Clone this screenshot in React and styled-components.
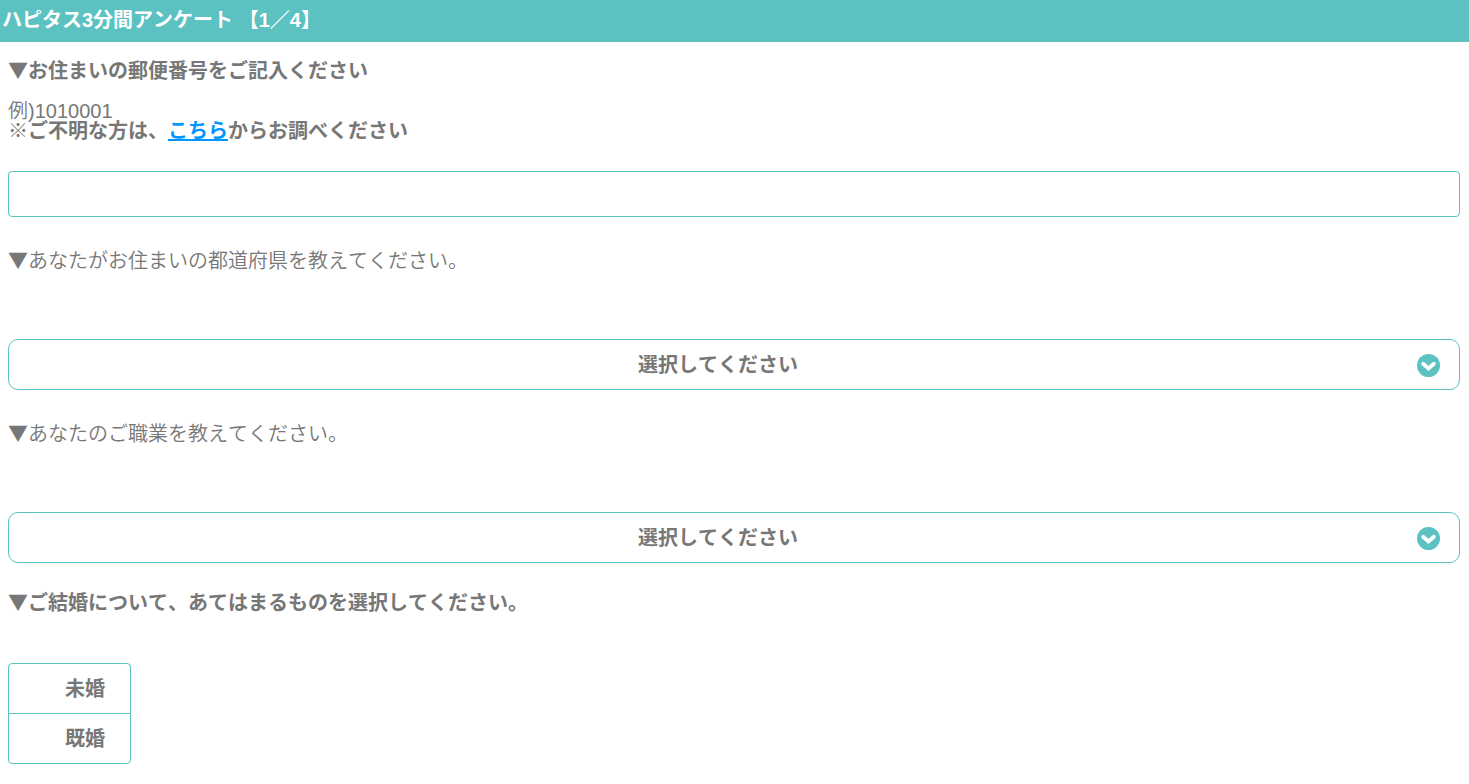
import React from "react";
import styled, { createGlobalStyle, css } from "styled-components";

const teal = "#5cc2c1";
const gray = "#777";

const GlobalStyle = createGlobalStyle`
  *, *::before, *::after {
    box-sizing: border-box;
  }
  body {
    margin: 0;
    background: #fff;
    color: ${gray};
    font-family: "Liberation Sans", "Noto Sans CJK JP", sans-serif;
    font-size: 20px;
    line-height: 20px;
    font-kerning: none;
  }
`;

const Header = styled.header`
  padding: 10px 2px 12px;
  background: ${teal};
  color: #fff;
`;
const Title = styled.h1`
  margin: 0;
  font-size: 20px;
  font-weight: 700;
`;
const Form = styled.form`
  display: flex;
  flex-direction: column;
  gap: 29px;
  padding: 18px 9px 20px 8px;
`;
const Question = styled.div`
  display: flex;
  flex-direction: column;
  gap: 30px;
  ${({ $select }) =>
    $select &&
    css`
      gap: 68px;
      padding-top: 4px;
    `}
`;
const labelStyle = css`
  display: block;
  padding: 0;
  font-weight: ${({ $bold }) => ($bold ? 700 : 350)};
`;
const Label = styled.label`
  ${labelStyle}
`;
const Marker = styled.span`
  font-family: "Noto Sans CJK JP", sans-serif;
`;
const Hint = styled.p`
  margin: 0;
  font-weight: 350;
`;
const Note = styled.p`
  margin: 0;
  font-weight: 700;
`;
const NoteLink = styled.a`
  color: #0095ff;
  text-decoration: underline;
`;
const Group = styled.div`
  display: flex;
  flex-direction: column;
  gap: 20px;
`;
const TextInput = styled.input`
  width: 100%;
  height: 46px;
  padding: 0 12px;
  border: 1px solid ${teal};
  border-radius: 4px;
  background: #fff;
  color: ${gray};
  font: inherit;
  outline: none;
`;
const SelectWrapper = styled.div`
  position: relative;
`;
const StyledSelect = styled.select`
  display: block;
  width: 100%;
  height: 51px;
  padding: 0 48px 0 16px;
  appearance: none;
  border: 1px solid ${teal};
  border-radius: 10px;
  background: #fff;
  color: ${gray};
  font: inherit;
  font-weight: 700;
  font-kerning: none;
  text-align: center;
  text-align-last: center;
  cursor: pointer;
`;
const Arrow = styled.svg`
  position: absolute;
  top: 15px;
  right: 20px;
  width: 23px;
  height: 23px;
  pointer-events: none;
`;
const Choices = styled.fieldset`
  min-width: 0;
  margin: 0;
  padding: 0;
  border: 0;
`;
const Legend = styled.legend`
  ${labelStyle}
  margin-bottom: 50px;
`;
const ChoiceList = styled.div`
  width: fit-content;
  border: 1px solid ${teal};
  border-radius: 4px;
  overflow: hidden;
`;
const Choice = styled.label`
  display: block;
  position: relative;
  padding: 15px 25px 14px 56px;
  font-weight: 700;
  cursor: pointer;

  & + & {
    border-top: 1px solid ${teal};
  }
  &:has(input:checked) {
    background: #e4f5f5;
  }
`;
const Radio = styled.input`
  position: absolute;
  margin: 0;
  opacity: 0;
`;

function SelectQuestion({ id, label, options }) {
  return (
    <Question $select>
      <Label htmlFor={id}>
        <Marker>▼</Marker>
        {label}
      </Label>
      <SelectWrapper>
        <StyledSelect id={id} name={id} defaultValue="">
          <option value="">選択してください</option>
          {options.map((option) => (
            <option key={option}>{option}</option>
          ))}
        </StyledSelect>
        <Arrow viewBox="0 0 24 24" aria-hidden="true">
          <circle cx="12" cy="12" r="12" fill={teal} />
          <path
            d="M6.4 10.2 L12 15 L17.6 10.2"
            fill="none"
            stroke="#fff"
            strokeWidth="4"
            strokeLinecap="round"
            strokeLinejoin="miter"
          />
        </Arrow>
      </SelectWrapper>
    </Question>
  );
}

export default function App() {
  return (
    <>
      <GlobalStyle />
      <Header>
        <Title>ハピタス3分間アンケート 【1／4】</Title>
      </Header>
      <Form lang="ja">
        <Question>
          <Group>
            <Label htmlFor="zip" $bold>
              <Marker>▼</Marker>お住まいの郵便番号をご記入ください
            </Label>
            <div>
              <Hint>例)1010001</Hint>
              <Note>
                ※ご不明な方は、<NoteLink href="#zip">こちら</NoteLink>からお調べください
              </Note>
            </div>
          </Group>
          <TextInput id="zip" name="zip" type="text" inputMode="numeric" />
        </Question>
        <SelectQuestion
          id="prefecture"
          label="あなたがお住まいの都道府県を教えてください。"
          options={["北海道", "東京都", "大阪府", "福岡県"]}
        />
        <SelectQuestion
          id="job"
          label="あなたのご職業を教えてください。"
          options={["会社員", "公務員", "自営業", "学生"]}
        />
        <Choices>
          <Legend $bold>
            <Marker>▼</Marker>ご結婚について、あてはまるものを選択してください。
          </Legend>
          <ChoiceList>
            {["未婚", "既婚"].map((name) => (
              <Choice key={name}>
                <Radio type="radio" name="marriage" value={name} />
                {name}
              </Choice>
            ))}
          </ChoiceList>
        </Choices>
      </Form>
    </>
  );
}
